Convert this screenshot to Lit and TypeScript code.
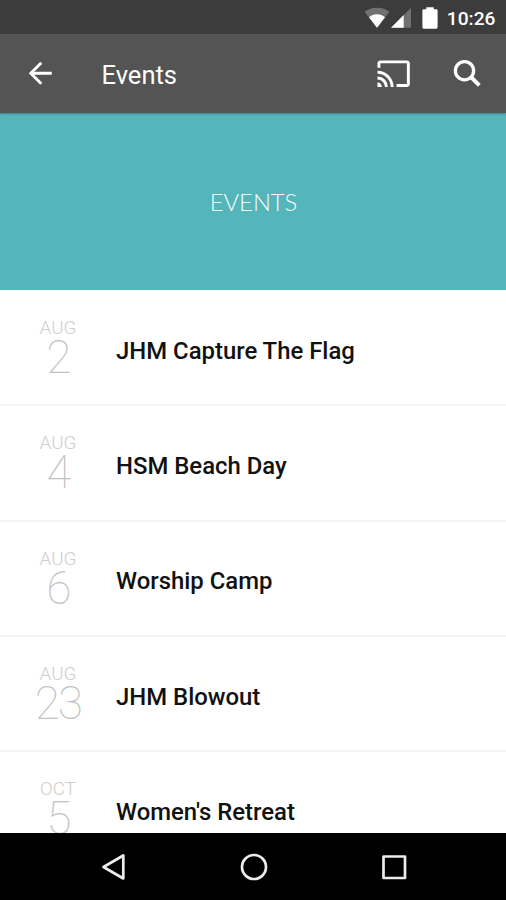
import { LitElement, html, css, svg } from "lit";
import { customElement, property } from "lit/decorators.js";

interface EventItem {
  month: string;
  day: number;
  title: string;
}

const EVENTS: EventItem[] = [
  { month: "AUG", day: 2, title: "JHM Capture The Flag" },
  { month: "AUG", day: 4, title: "HSM Beach Day" },
  { month: "AUG", day: 6, title: "Worship Camp" },
  { month: "AUG", day: 23, title: "JHM Blowout" },
  { month: "OCT", day: 5, title: "Women's Retreat" },
];

const castPath = svg`<path fill="currentColor" d="M21 3H3c-1.100 0-2 .9-2 2v3h2V5h18v14h-7v2h7c1.100 0 2-.9 2-2V5c0-1.100-.9-2-2-2zM1 18v3h3c0-1.660-1.340-3-3-3zm0-4v2c2.760 0 5 2.240 5 5h2c0-3.870-3.130-7-7-7zm0-4v2c4.970 0 9 4.030 9 9h2c0-6.080-4.930-11-11-11z"/>`;

@customElement("status-bar")
class StatusBar extends LitElement {
  static styles = css`
    :host {
      display: flex;
      justify-content: flex-end;
      align-items: flex-start;
      height: 34px;
      box-sizing: border-box;
      padding: 7px 10.500px 0 0;
      background: #3b3c3b;
      color: #fff;
    }
    svg { display: block; flex: none; }
    .signal { margin-left: 1.500px; }
    .battery { margin-left: 10.500px; }
    .clock {
      margin-left: 9px;
      font: 500 19.200px/23px Roboto, sans-serif;
    }
  `;
  render() {
    return html`
      <svg width="26" height="22" viewBox="0 0 26 22">
        <path fill="#6f706f" d="M13 21 .5 4.800C4 2 8 .7 13 .7S22 2 25.500 4.800z" />
        <path fill="#fff" d="M13 20.700 5 10.200C7.200 8.300 9.700 7.300 13 7.300s5.800 1 8 2.900z" />
      </svg>
      <svg class="signal" width="20" height="22" viewBox="0 0 20 22">
        <path fill="#6f706f" d="M0 20.700 20 .7v20z" />
        <path fill="#fff" d="M0 20.700 12.700 8v12.700z" />
      </svg>
      <svg class="battery" width="16" height="22" viewBox="0 0 16 22">
        <path fill="#fff" d="M4.300 .2h7.400v2.100H14.200Q15.600 2.300 15.600 3.700V20.300Q15.600 21.700 14.200 21.700H1.800Q.4 21.700 .4 20.300V3.700Q.4 2.300 1.800 2.300h2.500z" />
      </svg>
      <span class="clock">10:26</span>
    `;
  }
}

@customElement("tool-bar")
class ToolBar extends LitElement {
  @property() heading = "";
  static styles = css`
    :host {
      display: flex;
      align-items: center;
      height: 79px;
      box-sizing: border-box;
      padding: 0 20.500px 0 23px;
      background: #535453;
      color: #fff;
      box-shadow: 0 1px 2px rgba(0, 0, 0, 0.3);
      position: relative;
    }
    svg { display: block; flex: none; }
    .heading {
      flex: 1;
      margin: 0 0 0 44px;
      padding-top: 3px;
      font: 400 25.500px/30px Roboto, sans-serif;
    }
    .search { margin-left: 38px; }
  `;
  render() {
    return html`
      <svg width="34.500" height="34.500" viewBox="0 0 24 24">
        <path fill="currentColor" d="M20 11H7.830l5.590-5.590L12 4l-8 8 8 8 1.410-1.410L7.830 13H20v-2z" />
      </svg>
      <h1 class="heading">${this.heading}</h1>
      <svg width="35.300" height="35.300" viewBox="0 0 24 24">${castPath}</svg>
      <svg class="search" width="36" height="36" viewBox="0 0 36 36" fill="none" stroke="currentColor">
        <circle cx="14.500" cy="14.700" r="9.100" stroke-width="3.300" />
        <path d="M21 21 29.300 29.300" stroke-width="3.900" />
      </svg>
    `;
  }
}

@customElement("event-row")
class EventRow extends LitElement {
  @property({ attribute: false }) item!: EventItem;
  static styles = css`
    :host {
      display: flex;
      height: 115.300px;
      box-sizing: border-box;
      border-bottom: 2px solid #f3f3f3;
      font-family: Roboto, sans-serif;
    }
    .date {
      width: 116px;
      flex: none;
      box-sizing: border-box;
      display: flex;
      flex-direction: column;
      align-items: center;
      padding-top: 26px;
    }
    .month { font-size: 18.800px; font-weight: 300; line-height: 22px; color: #cecece; }
    .day { font-size: 45.500px; font-weight: 100; line-height: 38px; letter-spacing: -1.800px; color: #c2c2c2; }
    .title {
      align-self: center;
      padding-top: 6px;
      font-size: 23.900px;
      font-weight: 500;
      line-height: 28px;
      color: #111;
    }
  `;
  render() {
    return html`
      <div class="date">
        <span class="month">${this.item.month}</span>
        <span class="day">${this.item.day}</span>
      </div>
      <div class="title">${this.item.title}</div>
    `;
  }
}

@customElement("nav-bar")
class NavBar extends LitElement {
  static styles = css`
    :host {
      display: flex;
      justify-content: center;
      align-items: center;
      gap: 112px;
      height: 67px;
      box-sizing: border-box;
      padding-left: 1.400px;
      background: #000;
    }
    svg { display: block; fill: none; stroke: #ececec; stroke-width: 2.700; stroke-linejoin: round; }
  `;
  render() {
    return html`
      <svg width="28" height="28" viewBox="0 0 28 28"><path d="M3.500 14 23.300 2.500v23z" /></svg>
      <svg width="28" height="28" viewBox="0 0 28 28"><circle cx="14" cy="14" r="12" /></svg>
      <svg width="28" height="28" viewBox="0 0 28 28"><rect x="3.500" y="3.500" width="21.500" height="21.500" /></svg>
    `;
  }
}

@customElement("app-root")
class AppRoot extends LitElement {
  static styles = css`
    :host {
      display: flex;
      flex-direction: column;
      height: 100vh;
      overflow: hidden;
      background: #fff;
    }
    status-bar, tool-bar, nav-bar { flex: none; }
    .banner {
      flex: none;
      height: 177px;
      display: flex;
      align-items: center;
      justify-content: center;
      background: #54b5ba;
      color: #f2fdfd;
      font: 300 23.800px/28px Lato, sans-serif;
      padding-left: 1px;
      box-sizing: border-box;
    }
    .list { flex: 1; min-height: 0; overflow: hidden; padding-top: 1.200px; }
  `;
  render() {
    return html`
      <status-bar></status-bar>
      <tool-bar heading="Events"></tool-bar>
      <div class="banner">EVENTS</div>
      <div class="list">${EVENTS.map((e) => html`<event-row .item=${e}></event-row>`)}</div>
      <nav-bar></nav-bar>
    `;
  }
}
